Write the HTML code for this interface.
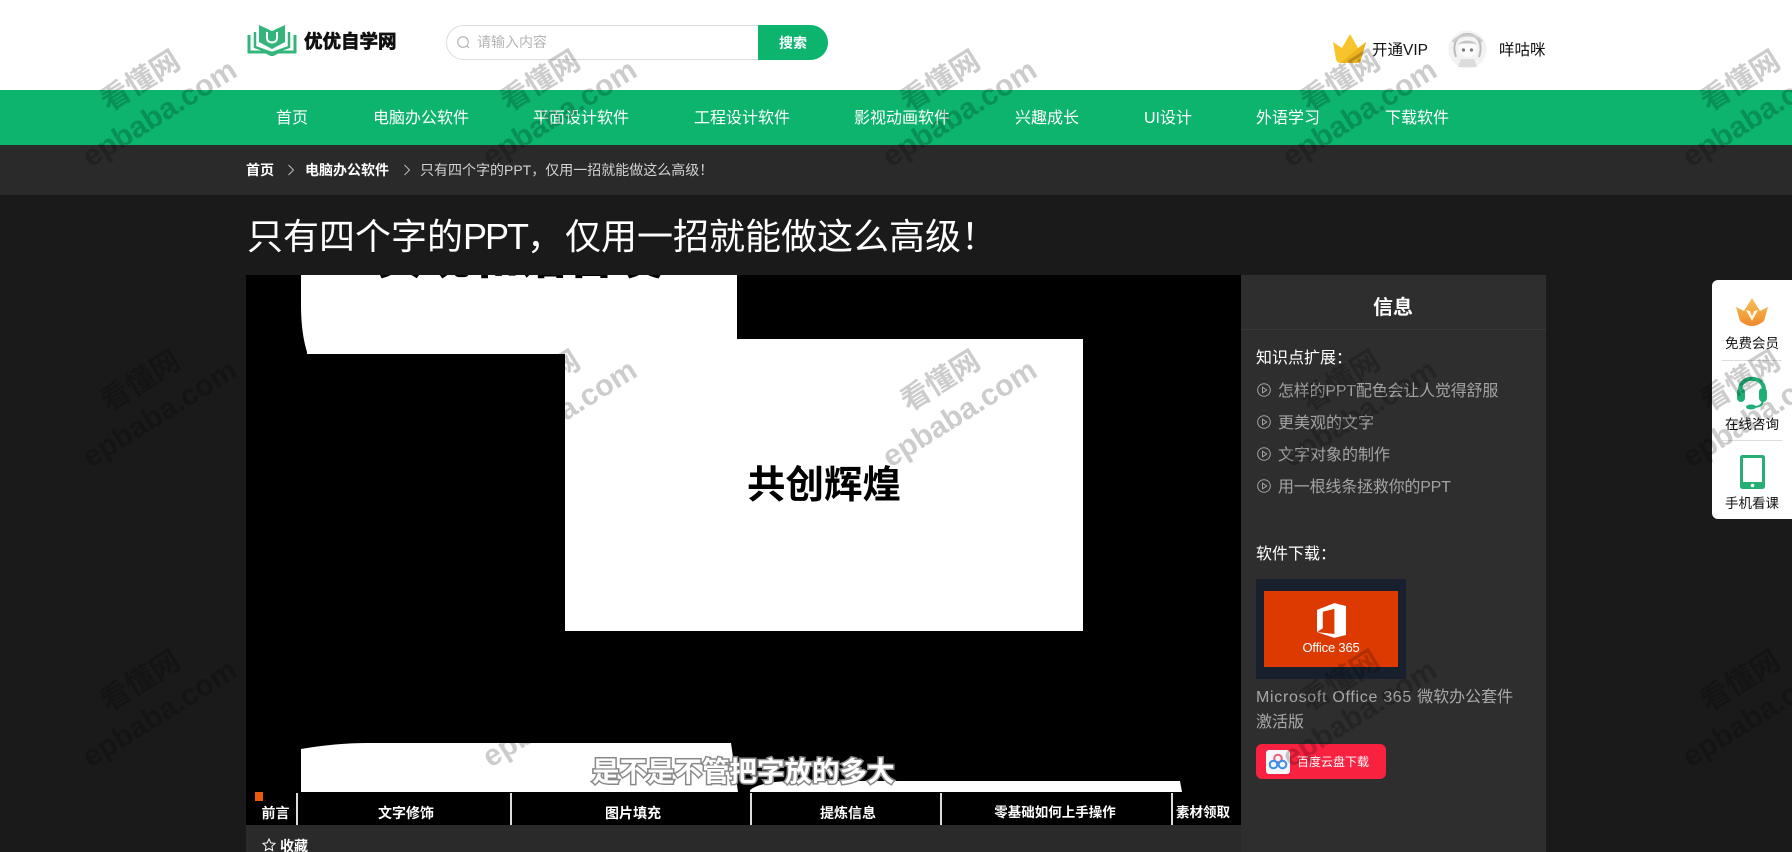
<!DOCTYPE html>
<html lang="zh-CN">
<head>
<meta charset="utf-8">
<title>只有四个字的PPT，仅用一招就能做这么高级！</title>
<style>
*{margin:0;padding:0;box-sizing:border-box}
html,body{width:1792px;height:852px;overflow:hidden;background:#1a1a1a}
body{position:relative;font-family:"Liberation Sans","Noto Sans CJK SC",sans-serif;color:#fff}
.a{position:absolute;white-space:nowrap;line-height:1}
.hd{left:0;top:0;width:1792px;height:90px;background:#fff}
.nav{left:0;top:90px;width:1792px;height:55px;background:#0cb46e}
.crumb{left:0;top:145px;width:1792px;height:50px;background:#2a2a2a}
.n{top:111px;font-size:16px;color:#fff}
.video{left:246px;top:275px;width:995px;height:550px;background:#000;overflow:hidden}
.w{position:absolute;background:#fff}
.ch{font-size:14px;font-weight:700;color:#fff;transform:translateX(-50%);top:806px}
.dv{top:793px;width:2px;height:32px;background:#ddd}
.side{left:1241px;top:275px;width:305px;height:577px;background:#2e2e2e}
.li{left:1278px;font-size:16px;color:#a3a3a3}
.float{left:1712px;top:280px;width:80px;height:239px;background:#fff;border-radius:6px 0 0 6px}
.ft{left:1712px;width:80px;text-align:center;font-size:13.5px;color:#111}
.wm{position:absolute;left:0;top:0;width:1792px;height:852px;overflow:hidden;pointer-events:none}
.wm span{position:absolute;white-space:nowrap;line-height:1;color:rgba(0,0,0,.2);font-weight:700;transform:translate(-50%,-50%) rotate(-32deg)}
.t1{font-size:29px}
.t2{font-size:30px}
</style>
</head>
<body>
<div class="a hd"></div>
<div class="a nav"></div>
<div class="a crumb"></div>

<svg class="a" style="left:247px;top:25px" width="50" height="31" viewBox="0 0 50 31">
<path d="M12 0 L25 6 L38 0 V17 L25 24 L12 17Z" fill="#35b57c"/>
<path d="M20 7v6c0 6 10 6 10 0V7" fill="none" stroke="#fff" stroke-width="2"/>
<path d="M8 7V22L25 28 42 22V7" fill="none" stroke="#35b57c" stroke-width="2.5"/>
<path d="M2 10V27H19L25 30 31 27H48V10" fill="none" stroke="#35b57c" stroke-width="3"/>
</svg>
<div class="a" style="left:304px;top:33px;font-size:18.5px;font-weight:700;color:#111;-webkit-text-stroke:.7px #111">优优自学网</div>

<div class="a" style="left:446px;top:25px;width:382px;height:35px;border:1px solid #ddd;border-radius:18px;background:#fff"></div>
<div class="a" style="left:758px;top:25px;width:70px;height:35px;background:#0cb46e;border-radius:0 18px 18px 0"></div>
<svg class="a" style="left:456px;top:35px" width="15" height="15" viewBox="0 0 15 15"><circle cx="7" cy="7" r="5.3" fill="none" stroke="#aaa" stroke-width="1"/><path d="M11 11l2 2" stroke="#aaa"/></svg>
<div class="a" style="left:477px;top:35px;font-size:14px;color:#b4b4b4">请输入内容</div>
<div class="a" style="left:779px;top:36px;font-size:14px;font-weight:700;color:#fff">搜索</div>

<svg class="a" style="left:1332px;top:34px" width="35" height="30" viewBox="0 0 35 30">
<path d="M1 8 L10 14 L18 0 L26 14 L34 8 L29 26 Q28 29 24 29 H9 Q5 29 4 25Z" fill="#f8c42b"/>
<path d="M8 29 L34 8 L29 26 Q28 29 24 29Z" fill="#eeb21f"/>
</svg>
<div class="a" style="left:1372px;top:43px;font-size:15.5px;color:#111">开通VIP</div>
<svg class="a" style="left:1448px;top:30px" width="39" height="39" viewBox="0 0 39 39">
<circle cx="19.500" cy="19.500" r="19" fill="#f3f3f3"/>
<path d="M8 27C3 12 11 4 19.500 4S36 12 31 27" fill="none" stroke="#bcbcbc" stroke-width="2"/>
<path d="M5 12C12 3 28 3 34 12" fill="none" stroke="#ccc" stroke-width="2.500"/>
<circle cx="19.500" cy="18" r="9" fill="#fbfbfb"/>
<path d="M10 15C13 9 26 9 29 15L26 13.500H13Z" fill="#c4c4c4"/>
<circle cx="15.500" cy="20" r="1.600" fill="#777"/><circle cx="23.500" cy="20" r="1.600" fill="#777"/>
<path d="M13 29H26L29 37H10Z" fill="#dcdcdc"/>
</svg>
<div class="a" style="left:1499px;top:43px;font-size:15.500px;color:#111">咩咕咪</div>

<div class="a n" style="left:276px">首页</div>
<div class="a n" style="left:373px">电脑办公软件</div>
<div class="a n" style="left:533px">平面设计软件</div>
<div class="a n" style="left:694px">工程设计软件</div>
<div class="a n" style="left:854px">影视动画软件</div>
<div class="a n" style="left:1015px">兴趣成长</div>
<div class="a n" style="left:1144px">UI设计</div>
<div class="a n" style="left:1256px">外语学习</div>
<div class="a n" style="left:1385px">下载软件</div>

<div class="a" style="left:246px;top:163px;font-size:14px;font-weight:700">首页</div>
<svg class="a" style="left:287px;top:164px" width="8" height="12" viewBox="0 0 8 12"><path d="M1.500 1L6.500 6 1.500 11" fill="none" stroke="#bbb"/></svg>
<div class="a" style="left:305px;top:163px;font-size:14px;font-weight:700">电脑办公软件</div>
<svg class="a" style="left:403px;top:164px" width="8" height="12" viewBox="0 0 8 12"><path d="M1.500 1L6.500 6 1.500 11" fill="none" stroke="#bbb"/></svg>
<div class="a" style="left:420px;top:163px;font-size:14px;color:#d2d2d2">只有四个字的PPT，仅用一招就能做这么高级！</div>

<div class="a" style="left:247px;top:219px;font-size:36px;color:#fff">只有四个字的<span style="letter-spacing:-2px">PPT</span>，<span style="margin-left:2px">仅用一招就能做这么高级！</span></div>

<div class="a video">
  <div class="w" style="left:55px;top:0;width:436px;height:64px"></div>
  <div class="w" style="left:55px;top:54px;width:6px;height:24px;background:#fff"></div>
  <svg style="position:absolute;left:55px;top:0" width="10" height="80" viewBox="0 0 10 80"><path d="M0 0V30Q0 60 7 80H0Z" fill="#000"/></svg>
  <div class="w" style="left:61px;top:60px;width:258px;height:19px"></div>
  <div class="w" style="left:319px;top:64px;width:518px;height:292px"></div>
  <div class="a" style="left:129px;top:-41px;font-size:48px;line-height:48px;font-weight:700;color:#000;-webkit-text-stroke:1px #000">实现和谐合发</div>
  <div class="a" style="left:501px;top:191px;font-size:38.500px;line-height:40px;font-weight:700;color:#000">共创辉煌</div>
  <svg style="position:absolute;left:0;top:460px" width="995" height="70" viewBox="0 0 995 70">
    <path d="M55 14Q90 8 121 8H485L492 57H55Z" fill="#fff"/>
    <path d="M504 57V55Q514 47 544 46H934L936 57Z" fill="#fff"/>
  </svg>
  <div class="a" style="left:346px;top:483px;font-size:27.500px;line-height:28px;font-weight:700;color:#fff;-webkit-text-stroke:3px #888;paint-order:stroke fill">是不是不管把字放的多大</div>
  <div class="w" style="left:9px;top:517px;width:8px;height:9px;background:#e9590c"></div>
</div>

<div class="a dv" style="left:296px"></div>
<div class="a dv" style="left:510px"></div>
<div class="a dv" style="left:750px"></div>
<div class="a dv" style="left:940px"></div>
<div class="a dv" style="left:1171px"></div>
<div class="a ch" style="left:275.500px">前言</div>
<div class="a ch" style="left:406px">文字修饰</div>
<div class="a ch" style="left:633px">图片填充</div>
<div class="a ch" style="left:848px">提炼信息</div>
<div class="a ch" style="left:1055px;font-size:13.500px">零基础如何上手操作</div>
<div class="a ch" style="left:1203px;font-size:13.500px">素材领取</div>

<div class="a" style="left:246px;top:825px;width:995px;height:27px;background:#2a2a2a"></div>
<svg class="a" style="left:262px;top:838px" width="14" height="14" viewBox="0 0 14 14"><path d="M7 1l1.800 3.900 4.200.5-3.100 2.900.8 4.200L7 10.500 3.300 12.500l.8-4.200L1 5.400l4.200-.5Z" fill="none" stroke="#fff"/></svg>
<div class="a" style="left:280px;top:839px;font-size:14px;font-weight:700">收藏</div>

<div class="a side"></div>
<div class="a" style="left:1241px;top:329px;width:305px;height:1px;background:#383838"></div>
<div class="a" style="left:1373px;top:298px;font-size:20px;font-weight:700">信息</div>
<div class="a" style="left:1256px;top:351px;font-size:16px;color:#fff">知识点扩展：</div>

<svg class="a" style="left:1257px;top:383px" width="14" height="14" viewBox="0 0 14 14"><circle cx="7" cy="7" r="6.300" fill="none" stroke="#a3a3a3"/><path d="M5.500 4.200L9.800 7 5.500 9.800Z" fill="none" stroke="#a3a3a3"/></svg>
<div class="a li" style="top:384px"><span style="letter-spacing:-.2px">怎样的PPT配色会让人觉得舒服</span></div>
<svg class="a" style="left:1257px;top:415px" width="14" height="14" viewBox="0 0 14 14"><circle cx="7" cy="7" r="6.300" fill="none" stroke="#a3a3a3"/><path d="M5.500 4.200L9.800 7 5.500 9.800Z" fill="none" stroke="#a3a3a3"/></svg>
<div class="a li" style="top:416px">更美观的文字</div>
<svg class="a" style="left:1257px;top:447px" width="14" height="14" viewBox="0 0 14 14"><circle cx="7" cy="7" r="6.300" fill="none" stroke="#a3a3a3"/><path d="M5.500 4.200L9.800 7 5.500 9.800Z" fill="none" stroke="#a3a3a3"/></svg>
<div class="a li" style="top:448px">文字对象的制作</div>
<svg class="a" style="left:1257px;top:479px" width="14" height="14" viewBox="0 0 14 14"><circle cx="7" cy="7" r="6.300" fill="none" stroke="#a3a3a3"/><path d="M5.500 4.200L9.800 7 5.500 9.800Z" fill="none" stroke="#a3a3a3"/></svg>
<div class="a li" style="top:480px"><span style="letter-spacing:-.2px">用一根线条拯救你的PPT</span></div>

<div class="a" style="left:1256px;top:547px;font-size:16px;color:#fff">软件下载：</div>

<div class="a" style="left:1256px;top:579px;width:150px;height:100px;background:#17202c"></div>
<div class="a" style="left:1264px;top:591px;width:134px;height:76px;background:#dc3a00"></div>
<svg class="a" style="left:1317px;top:603px" width="29" height="35" viewBox="0 0 30 36"><path d="M0 7L18 0 30 3V33L18 36 0 30 18 32V6L6 9V26L0 30Z" fill="#fff"/></svg>
<div class="a" style="left:1265px;top:641px;width:132px;text-align:center;font-size:13px;color:#fff;letter-spacing:-.2px">Office 365</div>
<div class="a" style="left:1256px;top:690px;font-size:16px;color:#a8a8a8"><span style="letter-spacing:.7px">Microsoft Office 365 </span>微软办公套件</div>
<div class="a" style="left:1256px;top:715px;font-size:16px;color:#a8a8a8">激活版</div>

<div class="a" style="left:1256px;top:744px;width:130px;height:35px;background:#f8213f;border-radius:6px"></div>
<svg class="a" style="left:1266px;top:750px" width="24" height="24" viewBox="0 0 24 24"><rect width="24" height="24" rx="3" fill="#f3f6fb"/><g fill="none" stroke-width="2"><circle cx="12" cy="8.500" r="3.800" stroke="#f05a78"/><circle cx="7.500" cy="14.500" r="3.800" stroke="#3a8ff0"/><circle cx="16.500" cy="14.500" r="3.800" stroke="#3a8ff0"/></g></svg>
<div class="a" style="left:1297px;top:756px;font-size:12px;color:#fff">百度云盘下载</div>

<div class="a float"></div>
<svg class="a" style="left:1736px;top:298px" width="32" height="28" viewBox="0 0 32 28"><defs><linearGradient id="g" x1="0" y1="0" x2="0" y2="1"><stop offset="0" stop-color="#f7c35a"/><stop offset="1" stop-color="#ee8a2a"/></linearGradient></defs><path d="M0 9L8 13 16 0 24 13 32 9 28 23Q22 28 16 28T4 23Z" fill="url(#g)"/><path d="M10 12L16 23 22 12 18 13 16 18 14 13Z" fill="#fff5e2"/></svg>
<div class="a ft" style="top:337px">免费会员</div>
<div class="a" style="left:1722px;top:360px;width:60px;height:1px;background:#ddd"></div>
<svg class="a" style="left:1737px;top:376px" width="30" height="34" viewBox="0 0 30 34"><path d="M3 14C3 -1 27 -1 27 14" fill="none" stroke="#1fae74" stroke-width="4"/><rect x="0" y="12" width="8" height="14" rx="4" fill="#1fae74"/><rect x="22" y="12" width="8" height="14" rx="4" fill="#1fae74"/><path d="M26 25C25 30 21 31 16 31" fill="none" stroke="#1fae74" stroke-width="2"/><ellipse cx="14" cy="31" rx="5" ry="2.500" fill="#1fae74"/></svg>
<div class="a ft" style="top:418px">在线咨询</div>
<div class="a" style="left:1722px;top:440px;width:60px;height:1px;background:#ddd"></div>
<svg class="a" style="left:1740px;top:455px" width="25" height="34" viewBox="0 0 25 34"><rect width="25" height="34" rx="2.500" fill="#27ae74"/><rect x="3" y="3" width="19" height="24" fill="#fff"/><circle cx="12.500" cy="30.500" r="1.800" fill="#fff"/></svg>
<div class="a ft" style="top:497px">手机看课</div>

<div class="wm">
<span class="t1" style="left:141px;top:82px">看懂网</span><span class="t2" style="left:160px;top:114px">epbaba.com</span>
<span class="t1" style="left:541px;top:82px">看懂网</span><span class="t2" style="left:560px;top:114px">epbaba.com</span>
<span class="t1" style="left:941px;top:82px">看懂网</span><span class="t2" style="left:960px;top:114px">epbaba.com</span>
<span class="t1" style="left:1341px;top:82px">看懂网</span><span class="t2" style="left:1360px;top:114px">epbaba.com</span>
<span class="t1" style="left:1741px;top:82px">看懂网</span><span class="t2" style="left:1760px;top:114px">epbaba.com</span>
<span class="t1" style="left:141px;top:382px">看懂网</span><span class="t2" style="left:160px;top:414px">epbaba.com</span>
<span class="t1" style="left:541px;top:382px">看懂网</span><span class="t2" style="left:560px;top:414px">epbaba.com</span>
<span class="t1" style="left:941px;top:382px">看懂网</span><span class="t2" style="left:960px;top:414px">epbaba.com</span>
<span class="t1" style="left:1341px;top:382px">看懂网</span><span class="t2" style="left:1360px;top:414px">epbaba.com</span>
<span class="t1" style="left:1741px;top:382px">看懂网</span><span class="t2" style="left:1760px;top:414px">epbaba.com</span>
<span class="t1" style="left:141px;top:682px">看懂网</span><span class="t2" style="left:160px;top:714px">epbaba.com</span>
<span class="t1" style="left:541px;top:682px">看懂网</span><span class="t2" style="left:560px;top:714px">epbaba.com</span>
<span class="t1" style="left:941px;top:682px">看懂网</span><span class="t2" style="left:960px;top:714px">epbaba.com</span>
<span class="t1" style="left:1341px;top:682px">看懂网</span><span class="t2" style="left:1360px;top:714px">epbaba.com</span>
<span class="t1" style="left:1741px;top:682px">看懂网</span><span class="t2" style="left:1760px;top:714px">epbaba.com</span>
</div>
</body>
</html>
